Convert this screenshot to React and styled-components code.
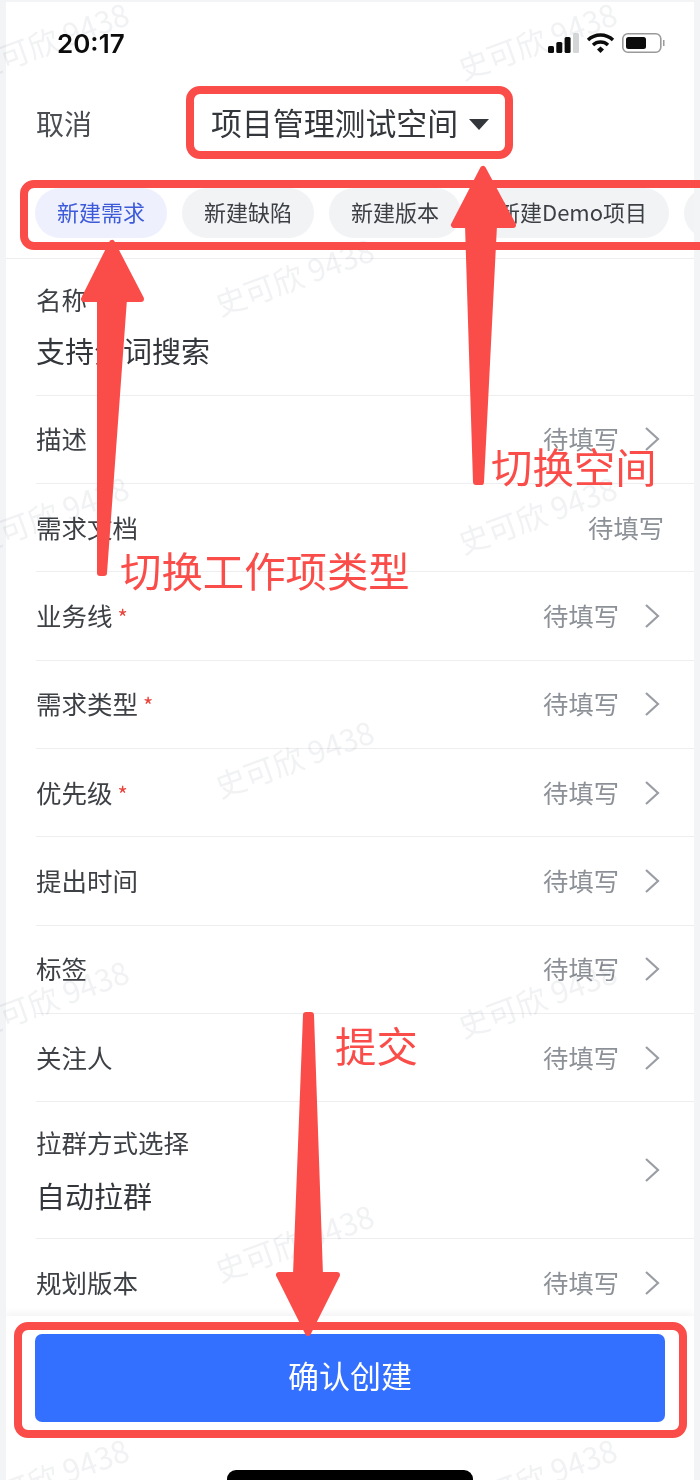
import React from 'react';
import styled, { createGlobalStyle } from 'styled-components';

const GlobalStyle = createGlobalStyle`
  html, body {
    margin: 0;
    padding: 0;
    background: #f3f4f6;
  }
  body {
    font-family: "Noto Sans CJK SC", "Noto Sans", sans-serif;
    color: #33363b;
  }
`;

const tabs = ['新建需求', '新建缺陷', '新建版本', '新建Demo项目', '新建任务'];

const fields = [
  { label: '描述', chevron: true },
  { label: '需求文档', chevron: false },
  { label: '业务线', required: true, chevron: true },
  { label: '需求类型', required: true, chevron: true },
  { label: '优先级', required: true, chevron: true },
  { label: '提出时间', chevron: true },
  { label: '标签', chevron: true },
  { label: '关注人', chevron: true },
];

// 水印位置
const marks = [
  [-34, 20], [454, 20], [211, 256],
  [-34, 494], [454, 494], [211, 738],
  [-34, 978], [454, 978], [211, 1222],
  [-34, 1456], [454, 1456],
];

const Page = styled.div`
  position: relative;
  width: 700px;
  height: 1480px;
  overflow: hidden;
  background: #f3f4f6;
`;

const Phone = styled.div`
  display: flex;
  flex-direction: column;
  height: 1478px;
  margin: 2px 6px 0;
  background: #fff;
  overflow: hidden;
`;

const StatusBar = styled.div`
  display: flex;
  justify-content: space-between;
  align-items: center;
  height: 82px;
  flex-shrink: 0;
  padding: 0 29px 0 51px;
  box-sizing: border-box;
`;

const Clock = styled.span`
  font-family: "Inter", "Liberation Sans", sans-serif;
  font-size: 26px;
  font-weight: 600;
  color: #0c0c0c;
`;

const StatusIcons = styled.div`
  display: flex;
  align-items: center;
`;

const Header = styled.div`
  display: flex;
  align-items: center;
  height: 80px;
  flex-shrink: 0;
  padding-left: 30px;
`;

const Cancel = styled.span`
  font-size: 28px;
  width: 175px;
  padding-bottom: 3px;
  color: #4a4d52;
`;

const SpaceTitle = styled.span`
  font-size: 30.9px;
  padding-bottom: 5px;
  color: #33363b;
`;

const Caret = styled.span`
  width: 0;
  height: 0;
  margin-left: 11px;
  border-left: 10px solid transparent;
  border-right: 10px solid transparent;
  border-top: 11px solid #33363b;
`;

const TabStrip = styled.div`
  display: flex;
  gap: 15px;
  flex-shrink: 0;
  padding: 24px 0 20px 29px;
  border-bottom: 1px solid #eceef0;
  overflow: hidden;
`;

const Tab = styled.div`
  flex-shrink: 0;
  height: 50px;
  box-sizing: border-box;
  padding: 0 22px 5px;
  border-radius: 25px;
  display: flex;
  align-items: center;
  font-size: 22px;
  white-space: nowrap;
  color: ${(p) => (p.$active ? '#3d5bd9' : '#3c3f44')};
  background: ${(p) => (p.$active ? '#eef1fd' : '#f2f3f5')};
`;

const Form = styled.div`
  flex: 1;
  min-height: 0;
  margin-left: 30px;
  overflow: hidden;
`;

const Row = styled.div`
  display: flex;
  justify-content: space-between;
  align-items: center;
  box-sizing: border-box;
  height: ${(p) => p.$height || '88.35px'};
  padding-right: ${(p) => (p.$chevron ? '34px' : '30px')};
  padding-bottom: 2px;
  border-bottom: ${(p) => (p.$last ? 'none' : '1px solid #eceef0')};
`;

const StackedRow = styled(Row)`
  align-items: flex-start;
`;

const Stack = styled.div`
  display: flex;
  flex-direction: column;
  padding-top: ${(p) => p.$top};
  gap: ${(p) => p.$gap};
`;

const Label = styled.span`
  font-size: 25.5px;
  line-height: 36px;
  color: #3d4045;
`;

const Star = styled.span`
  margin-left: 5px;
  color: #e8453c;
  font-size: 22px;
`;

const Value = styled.span`
  font-size: 29px;
  line-height: 36px;
  color: #33363b;
`;

const Hint = styled.div`
  display: flex;
  align-items: center;
  gap: 25px;
  font-size: 25.3px;
  color: #8c9097;
`;

const ChevronBox = styled.svg`
  flex-shrink: 0;
  display: block;
  margin-top: 2px;
  align-self: ${(p) => (p.$center ? 'center' : 'auto')};
`;

const Footer = styled.div`
  flex-shrink: 0;
  height: 164px;
  padding: 18px 29px 0;
  box-sizing: border-box;
  box-shadow: 0 -3px 8px rgba(0, 0, 0, 0.05);
  background: #fff;
  position: relative;
`;

const SubmitButton = styled.button`
  display: block;
  width: 100%;
  height: 88px;
  padding: 0 0 7px;
  border: none;
  border-radius: 7px;
  background: #3470ff;
  color: #fff;
  font-family: inherit;
  font-size: 31px;
`;

const HomeBar = styled.div`
  width: 246px;
  height: 18px;
  margin: 48px auto 0;
  border-radius: 9px;
  background: #000;
`;

const Watermark = styled.span`
  position: absolute;
  left: ${(p) => p.$x}px;
  top: ${(p) => p.$y}px;
  font-family: "Noto Sans CJK SC", "Liberation Sans", sans-serif;
  font-size: 30.5px;
  line-height: 40px;
  white-space: nowrap;
  color: #f1f2f4;
  transform: rotate(-20deg);
  mix-blend-mode: multiply;
  pointer-events: none;
`;

const Frame = styled.div`
  position: absolute;
  left: ${(p) => p.$x}px;
  top: ${(p) => p.$y}px;
  width: ${(p) => p.$w}px;
  height: ${(p) => p.$h}px;
  box-sizing: border-box;
  border: 8px solid #fa4d4a;
  border-radius: 14px;
`;

const Arrows = styled.svg`
  position: absolute;
  left: 0;
  top: 0;
`;

const Note = styled.span`
  position: absolute;
  left: ${(p) => p.$x}px;
  top: ${(p) => p.$y}px;
  font-size: 41.4px;
  line-height: 50px;
  white-space: nowrap;
  color: #fa4d4a;
`;

const Chevron = ({ center }) => (
  <ChevronBox $center={center} width="16" height="26" viewBox="0 0 16 26" fill="none">
    <path d="M2 2l12 11L2 24" stroke="#9a9ea4" strokeWidth="2.2" />
  </ChevronBox>
);

const SignalIcons = () => (
  <StatusIcons>
    <svg width="117" height="22" viewBox="0 0 117 22">
      <rect x="0" y="14" width="6" height="7" rx="1.5" fill="#0c0c0c" />
      <rect x="8.3" y="10" width="6" height="11" rx="1.5" fill="#0c0c0c" />
      <rect x="16.6" y="5" width="6" height="16" rx="1.5" fill="#0c0c0c" />
      <rect x="25" y="1" width="6" height="20" rx="1.5" fill="#d4d5d6" />
      <path d="M40 8a18 18 0 0 1 25 0" fill="none" stroke="#0c0c0c" strokeWidth="3.4" />
      <path d="M45 13a11 11 0 0 1 15 0" fill="none" stroke="#0c0c0c" strokeWidth="3.4" />
      <path d="M49 17.5l3.5-3 3.5 3-3.5 3.5z" fill="#0c0c0c" />
      <rect x="74.8" y="1.8" width="38" height="18.4" rx="5" fill="#fff" stroke="#9a9a9a" strokeWidth="1.6" />
      <rect x="78" y="5" width="20" height="12" rx="2.5" fill="#0c0c0c" />
      <rect x="115" y="8" width="1.5" height="6" fill="#9a9a9a" />
    </svg>
  </StatusIcons>
);

const App = () => {
  return (
    <Page>
      <GlobalStyle />
      <Phone>
        <StatusBar>
          <Clock>20:17</Clock>
          <SignalIcons />
        </StatusBar>
        <Header>
          <Cancel>取消</Cancel>
          <SpaceTitle>项目管理测试空间</SpaceTitle>
          <Caret />
        </Header>
        <TabStrip>
          {tabs.map((t, i) => (
            <Tab key={t} $active={i === 0}>{t}</Tab>
          ))}
        </TabStrip>
        <Form>
          <StackedRow $height="136.5px">
            <Stack $top="22px" $gap="15px">
              <Label>名称</Label>
              <Value>支持分词搜索</Value>
            </Stack>
          </StackedRow>
          {fields.map((f) => (
            <Row key={f.label} $chevron={f.chevron}>
              <div>
                <Label>{f.label}</Label>
                {f.required && <Star>*</Star>}
              </div>
              <Hint>
                待填写
                {f.chevron && <Chevron />}
              </Hint>
            </Row>
          ))}
          <StackedRow $height="136.5px" $chevron>
            <Stack $top="22px" $gap="17px">
              <Label>拉群方式选择</Label>
              <Value>自动拉群</Value>
            </Stack>
            <Chevron center />
          </StackedRow>
          <Row $chevron $last>
            <Label>规划版本</Label>
            <Hint>
              待填写
              <Chevron />
            </Hint>
          </Row>
        </Form>
        <Footer>
          <SubmitButton>确认创建</SubmitButton>
          <HomeBar />
        </Footer>
      </Phone>

      {marks.map(([x, y]) => (
        <Watermark key={`${x}-${y}`} $x={x} $y={y}>史可欣 9438</Watermark>
      ))}

      {/* 标注层 */}
      <Frame $x={186} $y={86} $w={327} $h={73} />
      <Frame $x={20} $y={180} $w={700} $h={70} />
      <Frame $x={14} $y={1322} $w={673} $h={116} />
      <Arrows width="700" height="1480" viewBox="0 0 700 1480">
        <g fill="#fa4d4a" stroke="#fa4d4a" strokeWidth="6" strokeLinejoin="round">
          <path d="M112 243L84 299H100V573H104L124 299H141Z" />
          <path d="M483 169L454 225H468L476 482H481L494 225H513Z" />
          <path d="M306 1015H311L320 1275H337L308 1333L279 1275H296Z" />
        </g>
      </Arrows>
      <Note $x={491} $y={440}>切换空间</Note>
      <Note $x={120} $y={544}>切换工作项类型</Note>
      <Note $x={335} $y={1019}>提交</Note>
    </Page>
  );
};

export default App;
